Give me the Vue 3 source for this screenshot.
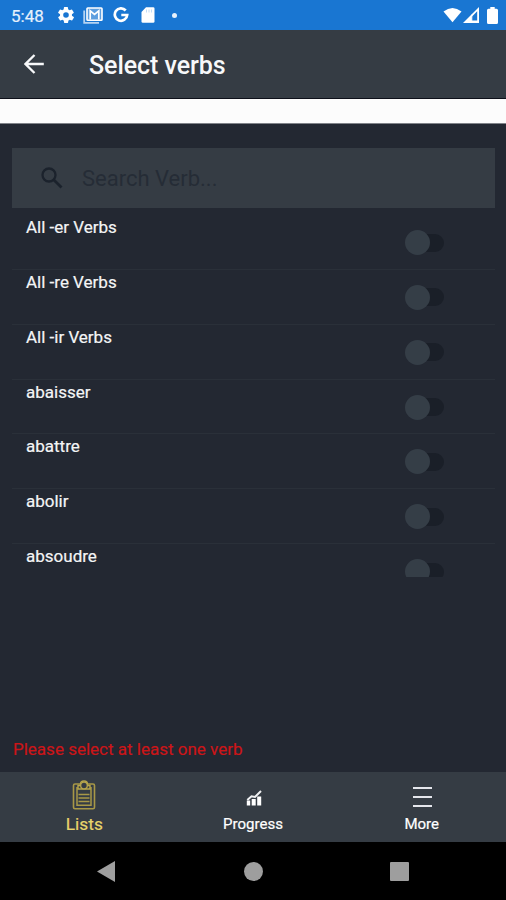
<script setup>
const verbs = ['All -er Verbs', 'All -re Verbs', 'All -ir Verbs', 'abaisser', 'abattre', 'abolir', 'absoudre']
</script>

<template>
  <div class="screen">
    <div class="status">
      <span class="clock">5:48</span>
      <svg class="gear" viewBox="2 2 20 20"><path fill="#fff" d="M19.4 13a7.5 7.5 0 0 0 0-2l2.1-1.6a.5.5 0 0 0 .1-.7l-2-3.4a.5.5 0 0 0-.6-.2l-2.5 1a7.3 7.3 0 0 0-1.7-1l-.4-2.6a.5.5 0 0 0-.5-.5h-4a.5.5 0 0 0-.5.5L9.1 5.1a7.3 7.3 0 0 0-1.7 1l-2.5-1a.5.5 0 0 0-.6.2l-2 3.4a.5.5 0 0 0 .1.7L4.6 11a7.5 7.5 0 0 0 0 2l-2.1 1.6a.5.5 0 0 0-.1.7l2 3.4c.1.2.4.3.6.2l2.5-1a7.3 7.3 0 0 0 1.7 1l.4 2.6c0 .3.2.5.5.5h4c.3 0 .5-.2.5-.5l.4-2.6a7.3 7.3 0 0 0 1.7-1l2.5 1c.2.1.5 0 .6-.2l2-3.4a.5.5 0 0 0-.1-.7zM12 15.5a3.5 3.5 0 1 1 0-7 3.500 3.500 0 0 1 0 7z" /></svg>
      <svg class="mail" viewBox="0 0 20 17"><path d="M1.200 3.500V15.800H16" fill="none" stroke="#b5d3f2" stroke-width="1.800" /><rect x="4" y="1" width="15" height="12.200" rx=".8" fill="#fff" fill-opacity=".3" stroke="#fff" stroke-width="1.600" /><path d="M7.200 12.500V3.800L11.500 7.500L15.800 3.800V12.500" fill="none" stroke="#fff" stroke-width="1.700" /></svg>
      <svg class="google" viewBox="0 0 16 16"><path d="M12.700 3.500A6.200 6.200 0 1 0 14.200 8H8.300" fill="none" stroke="#fff" stroke-width="2.700" /></svg>
      <svg class="sd" viewBox="0 0 14 16"><path fill="#fff" d="M5 .3h7.200q1.300 0 1.300 1.300v12.800q0 1.300-1.300 1.300H1.800Q.5 15.700.5 14.400V5z" /><path d="M5.500 2.500v3M8 2.500v3M10.500 2.500v3" stroke="#c3dcf5" stroke-width="1" /></svg>
      <span class="dot"></span>
      <span class="grow"></span>
      <svg class="wifi" viewBox="0 0 20 16"><path fill="#fff" d="M.5 4.300Q10-3.300 19.500 4.300L10 15.700z" /></svg>
      <svg class="signal" viewBox="0 0 16 16"><path fill="#fff" fill-rule="evenodd" d="M0 16L16 0v16zM8.800 9.800V13.500H14.200V4.200z" /><path fill="#fff" fill-opacity=".55" d="M8 16V8l1.500-1.500V16z" /></svg>
      <svg class="battery" viewBox="0 0 11 17"><path fill="#fff" d="M3.300 0h4.400v1.700h1.800q1.500 0 1.500 1.500v12.300q0 1.500-1.500 1.500h-8Q0 17 0 15.500V3.200q0-1.500 1.500-1.500h1.800z" /></svg>
    </div>
    <header class="header">
      <svg class="back" viewBox="0 0 20 20"><path d="M19.800 10H1.800M10.500 1L1.500 10L10.500 19" fill="none" stroke="#f7f8fa" stroke-width="2.300" /></svg>
      <h1>Select verbs</h1>
    </header>
    <div class="banner"></div>
    <main class="content">
      <div class="search">
        <svg class="lens" viewBox="0 0 22 22"><circle cx="8" cy="8" r="6.500" fill="none" stroke="#1b222c" stroke-width="2.300" /><path d="M12.700 12.700L20.500 20.500" stroke="#1b222c" stroke-width="2.800" /></svg>
        <span>Search Verb...</span>
      </div>
      <div class="list">
        <div v-for="verb in verbs" :key="verb" class="row">
          <span class="verb">{{ verb }}</span>
          <span class="toggle"><i class="knob"></i></span>
        </div>
      </div>
      <p class="error">Please select at least one verb</p>
    </main>
    <nav class="tabs">
      <div class="tab active">
        <svg class="clipboard" viewBox="0 0 24 30"><g fill="none" stroke="#a89847"><rect x="1.500" y="4" width="21" height="24.700" rx="1.500" stroke-width="1.600" /><path d="M5 7V25.200H19V7" stroke-width="1.500" /><path d="M6.500 14.500h11M6.500 18h11M6.500 21.500h11" stroke-width="1.500" /></g><path d="M6 9V5.500h2.500V4.500Q8.500 1 12 1t3.500 3.500v1H18V9z" fill="#3b3f3f" stroke="#b7a64c" stroke-width="1.400" /><circle cx="12" cy="5.500" r="3.300" fill="#343b43" stroke="#b7a64c" stroke-width="1.300" /></svg>
        <span>Lists</span>
      </div>
      <div class="tab">
        <svg class="chart" viewBox="0 0 16 17"><path fill="#fff" d="M.8 11.500h3.400v5H.8zM5.700 10h4v6.500h-4zM11.200 7.500h4v9h-4z" /><path d="M1.300 11L5.500 7.300L9 8L15 2" fill="none" stroke="#f0f1f3" stroke-width="2" /></svg>
        <span>Progress</span>
      </div>
      <div class="tab">
        <div class="menu"><i></i><i></i><i></i></div>
        <span>More</span>
      </div>
    </nav>
    <div class="system">
      <div><svg class="sysback" viewBox="0 0 18 21"><path fill="#9e9e9e" d="M18 0v21L0 10.500z" /></svg></div>
      <div><span class="home"></span></div>
      <div><span class="recent"></span></div>
    </div>
  </div>
</template>

<style>
body {
  margin: 0;
  background: #232832;
}
</style>

<style scoped>
* {
  box-sizing: border-box;
}
.screen {
  width: 506px;
  height: 900px;
  display: flex;
  flex-direction: column;
  overflow: hidden;
  background: #232832;
  color: #fff;
  font-family: Roboto, "Liberation Sans", sans-serif;
}
svg {
  display: block;
  flex: none;
}
.status {
  height: 30px;
  flex: none;
  display: flex;
  align-items: center;
  padding: 0 8px 0 11px;
  background: #1976d2;
}
.clock {
  width: 47px;
  padding-top: 2px;
  font-size: 17px;
  line-height: 20px;
  color: #e6f1fc;
  -webkit-text-stroke: 0.2px;
}
.gear {
  width: 16px;
  height: 16px;
  margin-right: 9px;
}
.mail {
  width: 20px;
  height: 17px;
  margin-right: 10px;
}
.google {
  width: 16px;
  height: 16px;
  margin-right: 12px;
}
.sd {
  width: 14px;
  height: 16px;
  margin-right: 17px;
}
.dot {
  width: 5px;
  height: 5px;
  border-radius: 50%;
  background: #e6f1fc;
}
.grow {
  flex: 1;
}
.wifi {
  width: 19px;
  height: 16px;
  margin-right: 1px;
}
.signal {
  width: 16px;
  height: 16px;
  margin-right: 8px;
}
.battery {
  width: 11px;
  height: 17px;
}
.header {
  height: 68.500px;
  flex: none;
  display: flex;
  align-items: center;
  padding: 1px 0 0 24px;
  background: #353c44;
  border-bottom: 1px solid #0d101a;
}
.back {
  width: 20px;
  height: 20px;
  margin-right: 45px;
}
h1 {
  margin: 3px 0 0;
  font-size: 25px;
  line-height: 30px;
  font-weight: 500;
  letter-spacing: -0.050px;
  color: #f7f8fa;
}
.banner {
  height: 25.500px;
  flex: none;
  background: #fcfcfc;
  border-bottom: 1px solid #808389;
}
.content {
  flex: 1;
  min-height: 0;
  display: flex;
  flex-direction: column;
  padding: 24px 11px 10px 12px;
}
.search {
  height: 60px;
  flex: none;
  display: flex;
  align-items: center;
  padding-left: 29px;
  background: #353c44;
  font-size: 22px;
  color: #252c36;
}
.lens {
  width: 22px;
  height: 22px;
  margin-right: 19px;
}
.list {
  height: 369px;
  flex: none;
  padding-top: 7px;
  overflow: hidden;
}
.row {
  height: 54.850px;
  display: flex;
  justify-content: space-between;
  align-items: flex-start;
  padding: 2px 50px 0 14px;
  border-bottom: 1px solid #2a3039;
}
.verb {
  font-size: 17px;
  line-height: 21px;
  color: #f4f5f6;
  -webkit-text-stroke: 0.2px;
}
.toggle {
  width: 38px;
  height: 18px;
  margin: 16.500px 1px 0 0;
  display: flex;
  align-items: center;
  border-radius: 9px;
  background: #1a1f28;
}
.knob {
  width: 25px;
  height: 25px;
  flex: none;
  margin-left: -1px;
  border-radius: 50%;
  background: #353e47;
}
.error {
  margin: auto 0 0 1px;
  font-size: 17px;
  line-height: 25px;
  color: #cc1518;
  -webkit-text-stroke: 0.2px;
}
.tabs {
  height: 70px;
  flex: none;
  display: grid;
  grid-template-columns: repeat(3, 1fr);
  background: #353c44;
}
.tab {
  display: flex;
  flex-direction: column;
  align-items: center;
  justify-content: flex-end;
  padding-bottom: 8px;
  font-size: 15px;
  line-height: 20px;
  -webkit-text-stroke: 0.2px;
}
.active {
  font-size: 17.300px;
  color: #e9d66b;
}
.clipboard {
  width: 24px;
  height: 30px;
  margin-bottom: 4px;
}
.chart {
  width: 16px;
  height: 17px;
  margin: 0 0 8px 2px;
}
.menu {
  width: 19px;
  height: 20px;
  display: flex;
  flex-direction: column;
  justify-content: space-between;
  margin: 0 0 7px 1px;
}
.menu i {
  height: 2px;
  background: #e4e6ec;
}
.system {
  height: 58px;
  flex: none;
  display: grid;
  grid-template-columns: repeat(3, 146px);
  justify-content: center;
  background: #000;
}
.system div {
  display: flex;
  align-items: center;
  justify-content: center;
}
.sysback {
  width: 18px;
  height: 21px;
  margin-right: 2px;
}
.home {
  width: 19px;
  height: 19px;
  border-radius: 50%;
  background: #9e9e9e;
}
.recent {
  width: 19px;
  height: 19px;
  border-radius: 1px;
  background: #9e9e9e;
}
</style>
